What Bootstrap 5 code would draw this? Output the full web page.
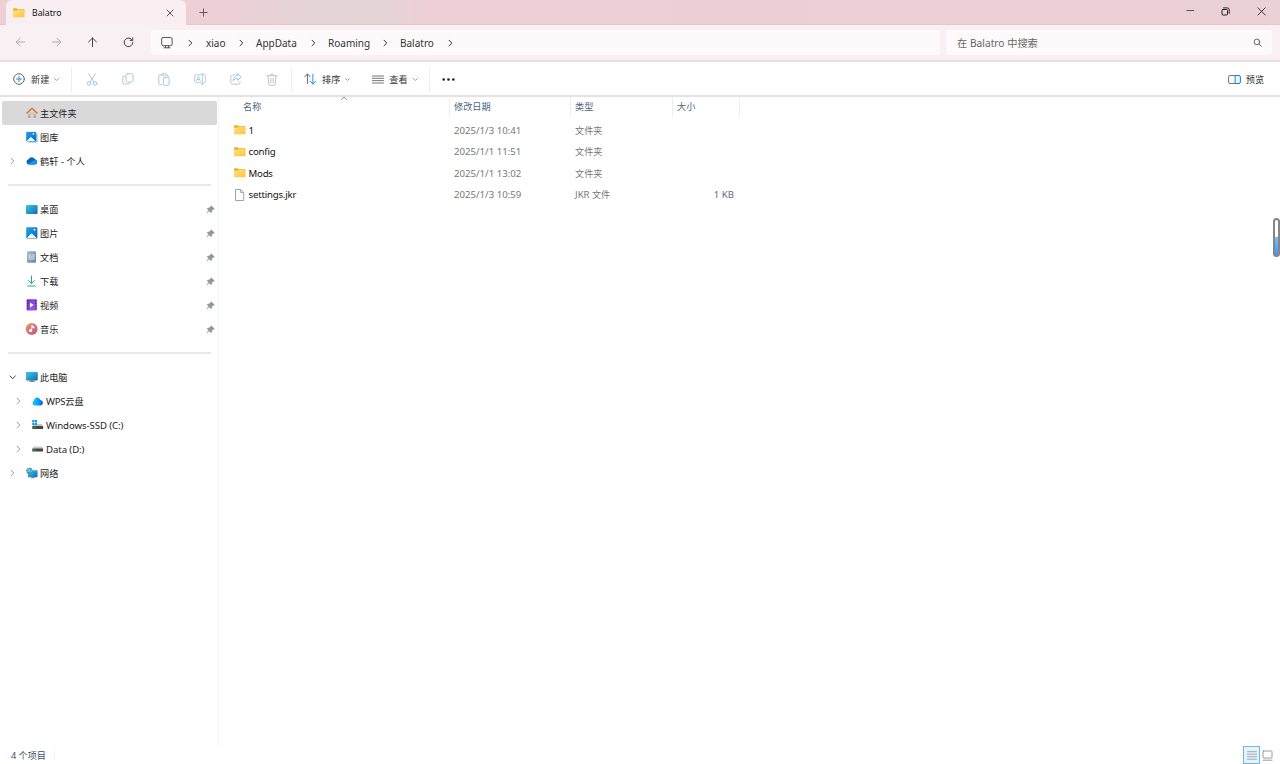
<!DOCTYPE html>
<html lang="zh-CN">
<head>
<meta charset="utf-8">
<meta name="viewport" content="width=device-width, initial-scale=1">
<title>Balatro</title>
<link href="https://cdn.jsdelivr.net/npm/bootstrap@5.3.0/dist/css/bootstrap.min.css" rel="stylesheet">
<style>
body{font-family:"Noto Sans","Noto Sans CJK SC",sans-serif;font-size:9.15px;line-height:1;color:#333;background:#fff;height:100vh;overflow:hidden}
svg{display:block;flex:none;overflow:visible}
.ln{fill:none;stroke:currentColor;stroke-linecap:round;stroke-linejoin:round}
.lat{font-size:9.65px}
.titlebar{height:25px;background:linear-gradient(90deg,#edcfd5 0,#edcfd5 210px,#e6d4d8 290px,#e5d5d8 380px,#edcfd5 430px,#ebd0d6 100%);border-bottom:1px solid #e4c6cd}
.win-tab{width:180px;height:25px;margin-left:6px;background:#f9eff2;border-radius:6px 6px 0 0;padding:0 12px 0 7px;margin-bottom:-1px}
.win-tab .lat{font-size:8.7px;color:#111;margin-left:7px;padding-top:2px}
.new-tab{margin-left:13px}
.controls{gap:27px;padding-right:14px;margin-top:-2px}
.addr{height:37px;background:#f9f0f3;border-bottom:2px solid #eadbe0}
.nav-set{padding-left:2px;margin-right:5px;color:#444}
.navbtn{width:36px}
.field{height:25px;background:#fefafc;border-radius:3px}
.path{width:789px;padding-left:10px;color:#333}
.path .crumb{font-size:10px;margin-right:1px;margin-left:-1px}
.search{width:326px;margin-left:6px;color:#666;font-size:10.2px;padding:0 10px 0 11px}
.search span{padding-top:1px;letter-spacing:.02px}
.tools{height:35px;padding-top:1px;border-bottom:2px solid #ecdfe3}
.vr-line{width:1px;height:25px;background:#eee}
.tool{width:36px}
.side{width:219px;border-right:1px solid #f4f4f4;padding-top:4px}
.tree{height:24px;padding-left:8px;padding-right:3px;color:#1c1c1c}
.tree .chev{width:10px;color:#999}
.tree .ico{width:13px;margin:0 1px 0 8px}
.tree .txt{padding-top:1px}
.tree .lat{letter-spacing:-.09px}
.tree.sub-item{padding-left:14px}
.tree.current{background:#d9d9d9;border-radius:2px;margin:0 1px 0 2px;padding-left:6px}
.rule{height:24px;padding:0 7px 0 8px}
.rule div{height:2px;background:#e8e8e8}
.grid-head{height:20px;color:#4f6683}
.grid-head .cell{border-right:1px solid #eee;height:20px}
.c1{width:231px}.c2{width:121px}.c3{width:102px}.c4{width:67px}
.c2,.c3,.c4{padding-left:4px}
.file{height:21.55px;color:#777}
.file .c1{padding-left:15px;color:#111}
.file .c1 .lat{margin-left:2.5px;letter-spacing:-.2px}
.file .c4{padding-right:6px;color:#5e6c80;font-size:9.6px}
.sort{left:122px;top:-1px}
.scroll{right:0;top:218px;width:7px;height:39px;border:2px solid #858585;border-radius:4px;background:linear-gradient(#fff 0 50%,#78bdff 50%,#3f96ff)}
.status{height:18px;padding-left:11px;padding-right:7px;color:#3c4f6b}
.count{padding-top:1px;padding-right:8px;border-right:1px solid #f3f3f3}
.details{width:17px;height:18px;background:#e5f3fb;border:1px solid #72b5e5}
</style>
</head>
<body class="d-flex flex-column">
<svg width="0" height="0" class="position-absolute">
<defs>
<linearGradient id="gold" x2="1" y2="1"><stop stop-color="#ffe291"/><stop offset="1" stop-color="#fcc236"/></linearGradient>
<linearGradient id="blue" x2="1" y2="1"><stop stop-color="#1ca4ec"/><stop offset="1" stop-color="#0868bd"/></linearGradient>
<linearGradient id="cyan" x2="1" y2="1"><stop stop-color="#36cce0"/><stop offset="1" stop-color="#1268bd"/></linearGradient>
<linearGradient id="slate" x2="1" y2="1"><stop stop-color="#a9bbd3"/><stop offset="1" stop-color="#6882a5"/></linearGradient>
<linearGradient id="wps" x2="1"><stop stop-color="#18c7f5"/><stop offset=".5" stop-color="#0ba5ff"/><stop offset="1" stop-color="#0952ed"/></linearGradient>
<linearGradient id="coral" x2="1" y2="1"><stop stop-color="#f29553"/><stop offset="1" stop-color="#b6549b"/></linearGradient>
<linearGradient id="violet" x2="1" y2="1"><stop stop-color="#7937cd"/><stop offset="1" stop-color="#a35be9"/></linearGradient>
<linearGradient id="wall" x2="0" y2="1"><stop stop-color="#ededed"/><stop offset="1" stop-color="#a5a5a5"/></linearGradient>
<symbol id="folder" viewBox="0 0 12 10"><path d="M0 1Q0 .3.5.3H3.7L4.8 1.2H11Q11.5 1.2 11.5 2V4H0Z" fill="#f0b321"/><path d="M0 2.8H4L5 1.9H11Q11.5 1.9 11.5 2.5V8.8Q11.5 9.3 11 9.3H.5Q0 9.3 0 8.8Z" fill="url(#gold)"/></symbol>
<symbol id="right" viewBox="0 0 5 8"><path class="ln" d="M1 1.2 3.8 4 1 6.8"/></symbol>
<symbol id="down" viewBox="0 0 5 3"><path class="ln" stroke-width=".8" d="M.5.5 2.5 2.4 4.5.5"/></symbol>
<symbol id="pin" viewBox="0 0 9 9"><path d="M5.1.4 8.7 3.7 7.9 4.3 6.4 5.2 5.7 7.5 4.8 7.8 3.1 6.2 .7 8.5.3 8 2.6 5.6 1 4 1.4 3.1 3.6 2.5 4.6.9Z" fill="#8c99a5"/></symbol>
<symbol id="picture" viewBox="0 0 12 12"><rect x=".2" y=".2" width="11.2" height="11.2" rx=".8" fill="url(#blue)"/><path d="M1 11.1 4.8 7Q5.7 6.2 6.6 7L10.5 11.1Z" fill="#fff"/><circle cx="8.5" cy="2.8" r="1" fill="#e7f8ff"/></symbol>
<symbol id="drive" viewBox="0 0 12 6"><path d="M1.5.5H10L11 2.8H.4Z" fill="#c9c9c9"/><rect x=".3" y="2.5" width="10.8" height="3" rx=".5" fill="#454545"/><rect x="1.3" y="3.6" width="2.5" height=".9" fill="#38a854"/></symbol>
</defs></svg>

<header class="titlebar d-flex align-items-end flex-shrink-0">
  <div class="win-tab d-flex align-items-center">
    <svg width="12" height="10"><use href="#folder"/></svg><span class="lat flex-grow-1">Balatro</span>
    <svg class="ln" width="8" height="8" viewBox="0 0 8 8" color="#333" stroke-width=".8"><path d="M1 1 7 7M7 1 1 7"/></svg>
  </div>
  <svg class="ln new-tab align-self-center" width="9" height="9" viewBox="0 0 9 9" color="#444" stroke-width=".8"><path d="M.8 4.5H8.2M4.5.8V8.2"/></svg>
  <div class="controls d-flex align-items-center align-self-center ms-auto">
    <svg class="ln" width="8" height="8" viewBox="0 0 8 8" stroke-width=".8"><path d="M.8 3.5H7.7"/></svg>
    <svg class="ln" width="9" height="9" viewBox="0 0 9 9" color="#222"><rect x="1" y="2.5" width="5.5" height="5.5" rx="1"/><path d="M2.5.9H6.3Q8.2.9 8.2 2.8V6.4"/></svg>
    <svg class="ln" width="9" height="9" viewBox="0 0 9 9" color="#222" stroke-width=".9"><path d="M1 .8 8.2 8M8.2 .8 1 8"/></svg>
  </div>
</header>

<nav class="addr d-flex align-items-center flex-shrink-0">
  <div class="nav-set d-flex">
    <div class="navbtn d-flex justify-content-center"><svg class="ln" width="11" height="11" viewBox="0 0 11 11" color="#b0aaac"><path d="M9.7 5H1.3M5 1.2 1.2 5 5 8.8"/></svg></div>
    <div class="navbtn d-flex justify-content-center"><svg class="ln" width="11" height="11" viewBox="0 0 11 11" color="#b0aaac"><path d="M1.3 5H9.7M6 1.2 9.8 5 6 8.8"/></svg></div>
    <div class="navbtn d-flex justify-content-center"><svg class="ln" width="11" height="11" viewBox="0 0 11 11"><path d="M5.5 9.5V1M1.5 5 5.5 1 9.5 5"/></svg></div>
    <div class="navbtn d-flex justify-content-center"><svg class="ln" width="11" height="11" viewBox="0 0 11 11"><path d="M9.8 5.5A4.3 4.3 0 1 1 8.6 2.4L9.5 3.3M9.7.9V3.4H7.2"/></svg></div>
  </div>
  <div class="field path d-flex align-items-center">
    <svg class="ln" width="12" height="12" viewBox="0 0 12 12" color="#555"><rect x=".7" y=".5" width="10.4" height="8.2" rx="1.4"/><path d="M3 10.8H9M4.5 9V10.5M7.5 9V10.5"/></svg>
    <svg width="5" height="8" style="margin-left:15px"><use href="#right"/></svg><span class="crumb" style="width:50px;padding-left:14px">xiao</span>
    <svg width="5" height="8" style="margin-left:-4px"><use href="#right"/></svg><span class="crumb" style="width:67px;padding-left:13px">AppData</span>
    <svg width="5" height="8"><use href="#right"/></svg><span class="crumb" style="width:67px;padding-left:13px">Roaming</span>
    <svg width="5" height="8"><use href="#right"/></svg><span class="crumb" style="width:60px;padding-left:13px">Balatro</span>
    <svg width="5" height="8"><use href="#right"/></svg>
  </div>
  <div class="field search d-flex align-items-center justify-content-between"><span>在 Balatro 中搜索</span>
    <svg class="ln" width="9" height="9" viewBox="0 0 9 9"><circle cx="3.9" cy="3.9" r="2.8"/><path d="M6 6 8.3 8.3"/></svg></div>
</nav>

<div class="tools d-flex align-items-center flex-shrink-0">
  <div class="d-flex align-items-center" style="width:71px;padding-left:13px">
    <svg class="ln" width="12" height="12" viewBox="0 0 12 12" color="#666"><circle cx="6" cy="6" r="5.3"/><path d="M3.5 6H8.5M6 3.5V8.5" stroke="#2493dc"/></svg>
    <span style="margin:1px 5px 0 6px">新建</span><svg width="5" height="3" color="#888"><use href="#down"/></svg>
  </div>
  <div class="vr-line"></div>
  <div class="d-flex align-items-center" style="width:220px;padding-left:2px;color:#c4c4c4">
    <div class="tool d-flex justify-content-center"><svg class="ln" width="12" height="13" viewBox="0 0 12 13"><path d="M2.5.7 8 9M9.5.7 4 9"/><g stroke="#9acdf0"><circle cx="3" cy="10.4" r="1.8"/><circle cx="9" cy="10.4" r="1.8"/></g></svg></div>
    <div class="tool d-flex justify-content-center"><svg class="ln" width="12" height="12" viewBox="0 0 12 12"><path d="M3 3.3H2Q.7 3.3.7 4.6V9Q.7 11 2.7 11H6.5Q7.5 11 8 10"/><rect x="4" y=".7" width="7" height="8.3" rx="1.6" stroke="#9acdf0"/></svg></div>
    <div class="tool d-flex justify-content-center"><svg class="ln" width="12" height="13" viewBox="0 0 12 13"><path d="M3.7 1.8H2Q.8 1.8.8 3V10.5Q.8 11.7 2 11.7H4M7.8 1.8H9Q10 1.8 10 3V3.5"/><rect x="3.7" y=".7" width="4" height="2" rx="1"/><rect x="5.4" y="4.4" width="5.7" height="7.8" rx="1" stroke="#9acdf0"/></svg></div>
    <div class="tool d-flex justify-content-center"><svg class="ln" width="12" height="12" viewBox="0 0 13 12"><path d="M7.5 1.5H2Q.7 1.5.7 2.8V8.7Q.7 10 2 10H7.5M10.5 1.5H11Q12.3 1.5 12.3 2.8V8.7Q12.3 10 11 10H10.5"/><g stroke="#9acdf0"><path d="M9 .5V11.5M7.8.5H10.2M7.8 11.5H10.2M2.7 8 4.7 3.3 6.7 8M3.5 6.5H6"/></g></svg></div>
    <div class="tool d-flex justify-content-center"><svg class="ln" width="12" height="12" viewBox="0 0 12 12"><path d="M4.5 2H2.5Q.8 2 .8 3.7V9.5Q.8 11.2 2.5 11.2H8.3Q10 11.2 10 9.5V8.5"/><path d="M7.5.7 11.3 4 7.5 7.3V5.5Q4.8 5.2 3.2 7.7 3.4 2.9 7.5 2.6Z" stroke="#9acdf0"/></svg></div>
    <div class="tool d-flex justify-content-center"><svg class="ln" width="12" height="13" viewBox="0 0 12 13"><path d="M.8 2.7H11.2M4.3 2.5Q4.3.8 6 .8T7.7 2.5M2 2.8 2.8 11Q2.9 12.2 4 12.2H8Q9.1 12.2 9.2 11L10 2.8M4.8 5.2V9.7M7.2 5.2V9.7"/></svg></div>
  </div>
  <div class="vr-line" style="margin-left:-1px"></div>
  <div class="d-flex align-items-center" style="width:137px;padding-left:12px">
    <svg class="ln" width="12" height="12" viewBox="0 0 12 12" color="#666"><path d="M3.4 10.5V1M.8 3.7 3.4 1 6 3.7"/><path d="M8.9 1.3V11M6.3 8.3 8.9 11 11.5 8.3" stroke="#2591dd"/></svg>
    <span style="margin:1px 5px 0 6px">排序</span><svg width="5" height="3" color="#888"><use href="#down"/></svg>
    <svg class="ln" style="margin-left:22px" width="12" height="9" viewBox="0 0 12 9" color="#666"><path d="M.5 1H11.5M.5 3.3H11.5M.5 5.6H11.5M.5 8H11.5" stroke-width=".9"/></svg>
    <span style="margin:1px 5px 0 5px">查看</span><svg width="5" height="3" color="#888"><use href="#down"/></svg>
  </div>
  <div class="vr-line"></div>
  <svg style="margin-left:12px" width="13" height="3" viewBox="0 0 13 3" fill="#222"><circle cx="1.7" cy="1.5" r="1.3"/><circle cx="6.5" cy="1.5" r="1.3"/><circle cx="11.3" cy="1.5" r="1.3"/></svg>
  <div class="ms-auto d-flex align-items-center" style="padding-right:16px"><svg class="ln" width="13" height="9" viewBox="0 0 13 9" color="#777"><path d="M7.5.5H2Q.6.5.6 1.9V7Q.6 8.5 2 8.5H7.5"/><path d="M7.5.5H11Q12.4.5 12.4 1.9V7Q12.4 8.5 11 8.5H7.5Z" fill="#e5f4fd" stroke="#1683d2"/></svg><span style="margin:1px 0 0 5px">预览</span></div>
</div>

<main class="d-flex flex-grow-1 overflow-hidden">
  <aside class="side flex-shrink-0">
    <div class="tree current d-flex align-items-center"><span class="chev"></span><span class="ico"><svg width="12" height="12" viewBox="0 0 13 12"><path d="M2 5.5 6.5 1.5 11 5.5V11.5H8V7.5H5V11.5H2Z" fill="url(#wall)"/><path d="M1 6 6.5 1 12 6" class="ln" style="stroke:#df742e;stroke-width:1.6"/></svg></span><span class="txt">主文件夹</span></div>
    <div class="tree d-flex align-items-center"><span class="chev"></span><span class="ico"><svg width="12" height="12" viewBox="0 0 13 12"><rect x="2.5" y="2" width="10" height="10" rx="1" fill="#83bce5"/><use href="#picture" width="11.3" height="11.3"/></svg></span><span class="txt">图库</span></div>
    <div class="tree d-flex align-items-center"><span class="chev"><svg width="5" height="8" style="margin-left:2px"><use href="#right"/></svg></span><span class="ico"><svg width="12" height="8" viewBox="0 0 13 8"><path d="M3 7.7A2.8 2.8 0 0 1 2.7 2.2 4 4 0 0 1 9.8 2.2 2.8 2.8 0 0 1 10 7.7Z" fill="#0865bd"/><path d="M2 7.5 8 3.5Q9 2.7 10.3 3A2.4 2.4 0 0 1 10 7.7H3Z" fill="#1596e4"/></svg></span><span class="txt" style="letter-spacing:.12px">鹤轩 - 个人</span></div>
    <div class="rule d-flex align-items-center"><div class="w-100"></div></div>
    <div class="tree d-flex align-items-center"><span class="chev"></span><span class="ico"><svg width="12" height="9" viewBox="0 0 12 9"><rect width="11.6" height="9" rx=".8" fill="url(#cyan)"/></svg></span><span class="txt flex-grow-1">桌面</span><svg width="9" height="9"><use href="#pin"/></svg></div>
    <div class="tree d-flex align-items-center"><span class="chev"></span><span class="ico"><svg width="12" height="12"><use href="#picture"/></svg></span><span class="txt flex-grow-1">图片</span><svg width="9" height="9"><use href="#pin"/></svg></div>
    <div class="tree d-flex align-items-center"><span class="chev"></span><span class="ico"><svg width="12" height="12" viewBox="0 0 12 12"><rect x="1" y=".2" width="9" height="11.5" rx=".7" fill="url(#slate)"/><path class="ln" style="stroke:#fff;stroke-width:.8" d="M2.8 4H5M2.8 6H8.3M2.8 8H8.3M6.5 4H8.3"/></svg></span><span class="txt flex-grow-1">文档</span><svg width="9" height="9"><use href="#pin"/></svg></div>
    <div class="tree d-flex align-items-center"><span class="chev"></span><span class="ico"><svg width="12" height="12" viewBox="0 0 12 12"><path class="ln" style="stroke:#24aa91" d="M5.5 1V8.5M2.5 5.7 5.5 8.6 8.5 5.7M1.7 11H9.3"/></svg></span><span class="txt flex-grow-1">下载</span><svg width="9" height="9"><use href="#pin"/></svg></div>
    <div class="tree d-flex align-items-center"><span class="chev"></span><span class="ico"><svg width="12" height="12" viewBox="0 0 12 12"><rect x=".6" y=".3" width="10.3" height="11.3" rx=".7" fill="url(#violet)"/><path d="M1.8 1V11M9.8 1V11" stroke="#31145c" stroke-width="1" stroke-dasharray="1.3 1.3"/><path d="M4 3.6 7.7 6 4 8.4Z" fill="#fff"/></svg></span><span class="txt flex-grow-1">视频</span><svg width="9" height="9"><use href="#pin"/></svg></div>
    <div class="tree d-flex align-items-center"><span class="chev"></span><span class="ico"><svg width="12" height="12" viewBox="0 0 12 12"><circle cx="5.7" cy="6" r="5.9" fill="url(#coral)"/><circle cx="4.6" cy="7.5" r="1.6" fill="#fff"/><path d="M5.7 7.5V2.2L8.1 3.7V5.2L6.4 4.4" fill="#fff" stroke="#fff" stroke-width=".5"/></svg></span><span class="txt flex-grow-1">音乐</span><svg width="9" height="9"><use href="#pin"/></svg></div>
    <div class="rule d-flex align-items-center"><div class="w-100"></div></div>
    <div class="tree d-flex align-items-center"><span class="chev"><svg width="8" height="5" viewBox="0 0 8 5" color="#444"><path class="ln" d="M2 1 4.7 3.7 7.4 1"/></svg></span><span class="ico"><svg width="12" height="10" viewBox="0 0 12 10"><rect x=".3" y=".3" width="11.2" height="8" rx=".5" fill="url(#cyan)" stroke="#387995" stroke-width=".5"/><path d="M4.5 8H7.5V9.3H9V9.9H3V9.3H4.5Z" fill="#778995"/></svg></span><span class="txt">此电脑</span></div>
    <div class="tree sub-item d-flex align-items-center"><span class="chev"><svg width="5" height="8" style="margin-left:2px"><use href="#right"/></svg></span><span class="ico"><svg width="12" height="9" viewBox="0 0 12 9"><path d="M3 8.6A2.6 2.6 0 0 1 1.7 3.8Q2.8.3 5.3.4 7.6.5 8.3 2.9A2.9 2.9 0 0 1 8.8 8.6Z" fill="url(#wps)"/></svg></span><span class="txt"><span class="lat" style="letter-spacing:-.25px">WPS</span>云盘</span></div>
    <div class="tree sub-item d-flex align-items-center"><span class="chev"><svg width="5" height="8" style="margin-left:2px"><use href="#right"/></svg></span><span class="ico"><svg width="12" height="10" viewBox="0 0 12 10"><use href="#drive" y="3.5" width="12" height="6"/><path d="M.2 0H2.4V2.2H.2ZM2.9 0H5.1V2.2H2.9ZM.2 2.7H2.4V4.9H.2ZM2.9 2.7H5.1V4.9H2.9Z" fill="#149cdb"/></svg></span><span class="lat txt">Windows-SSD (C:)</span></div>
    <div class="tree sub-item d-flex align-items-center"><span class="chev"><svg width="5" height="8" style="margin-left:2px"><use href="#right"/></svg></span><span class="ico"><svg width="12" height="6"><use href="#drive"/></svg></span><span class="lat txt">Data (D:)</span></div>
    <div class="tree d-flex align-items-center"><span class="chev"><svg width="5" height="8" style="margin-left:2px"><use href="#right"/></svg></span><span class="ico"><svg width="12" height="12" viewBox="0 0 13 12"><rect x="2" y="3" width="10.5" height="7.5" rx=".5" fill="url(#cyan)"/><path d="M6 10H9V11.2H10V11.8H5V11.2H6Z" fill="#778995"/><circle cx="3.7" cy="3.8" r="3.4" fill="#3c99bd"/><path d="M1.3 2.4Q3.5.5 4 2.5T1.6 4.7M5 4.6 6.7 3.2" stroke="#a9e0ea" fill="none"/></svg></span><span class="txt">网络</span></div>
  </aside>

  <section class="flex-grow-1">
    <div class="grid-head d-flex position-relative">
      <svg class="sort position-absolute" width="6" height="4" viewBox="0 0 6 4" color="#777"><path class="ln" stroke-width=".8" d="M.5 3.3 3 1 5.5 3.3"/></svg>
      <div class="cell c1 d-flex align-items-center" style="padding-left:24px">名称</div><div class="cell c2 d-flex align-items-center">修改日期</div><div class="cell c3 d-flex align-items-center">类型</div><div class="cell c4 d-flex align-items-center">大小</div>
    </div>
    <div style="padding-top:2.6px">
      <div class="file d-flex align-items-center"><div class="c1 d-flex align-items-center"><svg width="12" height="10"><use href="#folder"/></svg><span class="lat">1</span></div><div class="c2 lat">2025/1/3 10:41</div><div class="c3">文件夹</div></div>
      <div class="file d-flex align-items-center"><div class="c1 d-flex align-items-center"><svg width="12" height="10"><use href="#folder"/></svg><span class="lat">config</span></div><div class="c2 lat">2025/1/1 11:51</div><div class="c3">文件夹</div></div>
      <div class="file d-flex align-items-center"><div class="c1 d-flex align-items-center"><svg width="12" height="10"><use href="#folder"/></svg><span class="lat">Mods</span></div><div class="c2 lat">2025/1/1 13:02</div><div class="c3">文件夹</div></div>
      <div class="file d-flex align-items-center"><div class="c1 d-flex align-items-center"><svg width="12" height="12" viewBox="0 0 12 12"><path d="M1.5.5H6.7L9.7 3.5V11.5H1.5ZM6.7.5V3.5H9.7" fill="#fcfcfc" stroke="#999" stroke-width=".9"/></svg><span class="lat">settings.jkr</span></div><div class="c2 lat">2025/1/3 10:59</div><div class="c3"><span class="lat">JKR</span> 文件</div><div class="c4 text-end">1 KB</div></div>
    </div>
  </section>
</main>
<div class="scroll position-absolute"></div>

<footer class="status d-flex align-items-center flex-shrink-0">
  <span class="count">4 个项目</span>
  <div class="ms-auto d-flex align-items-center" style="gap:2px">
    <div class="details d-flex align-items-center justify-content-center"><svg class="ln" width="10" height="9" viewBox="0 0 10 9" color="#8b979f"><path stroke-width=".8" d="M.5.7H9.5M.5 3.2H9.5M.5 5.7H9.5M.5 8.2H9.5"/></svg></div>
    <svg class="ln" width="11" height="11" viewBox="0 0 11 11" color="#999"><rect x="1" y="1" width="9" height="7" rx=".7"/><path d="M1 10.2H10"/></svg>
  </div>
</footer>
<script src="https://cdn.jsdelivr.net/npm/bootstrap@5.3.0/dist/js/bootstrap.bundle.min.js"></script>
</body>
</html>
